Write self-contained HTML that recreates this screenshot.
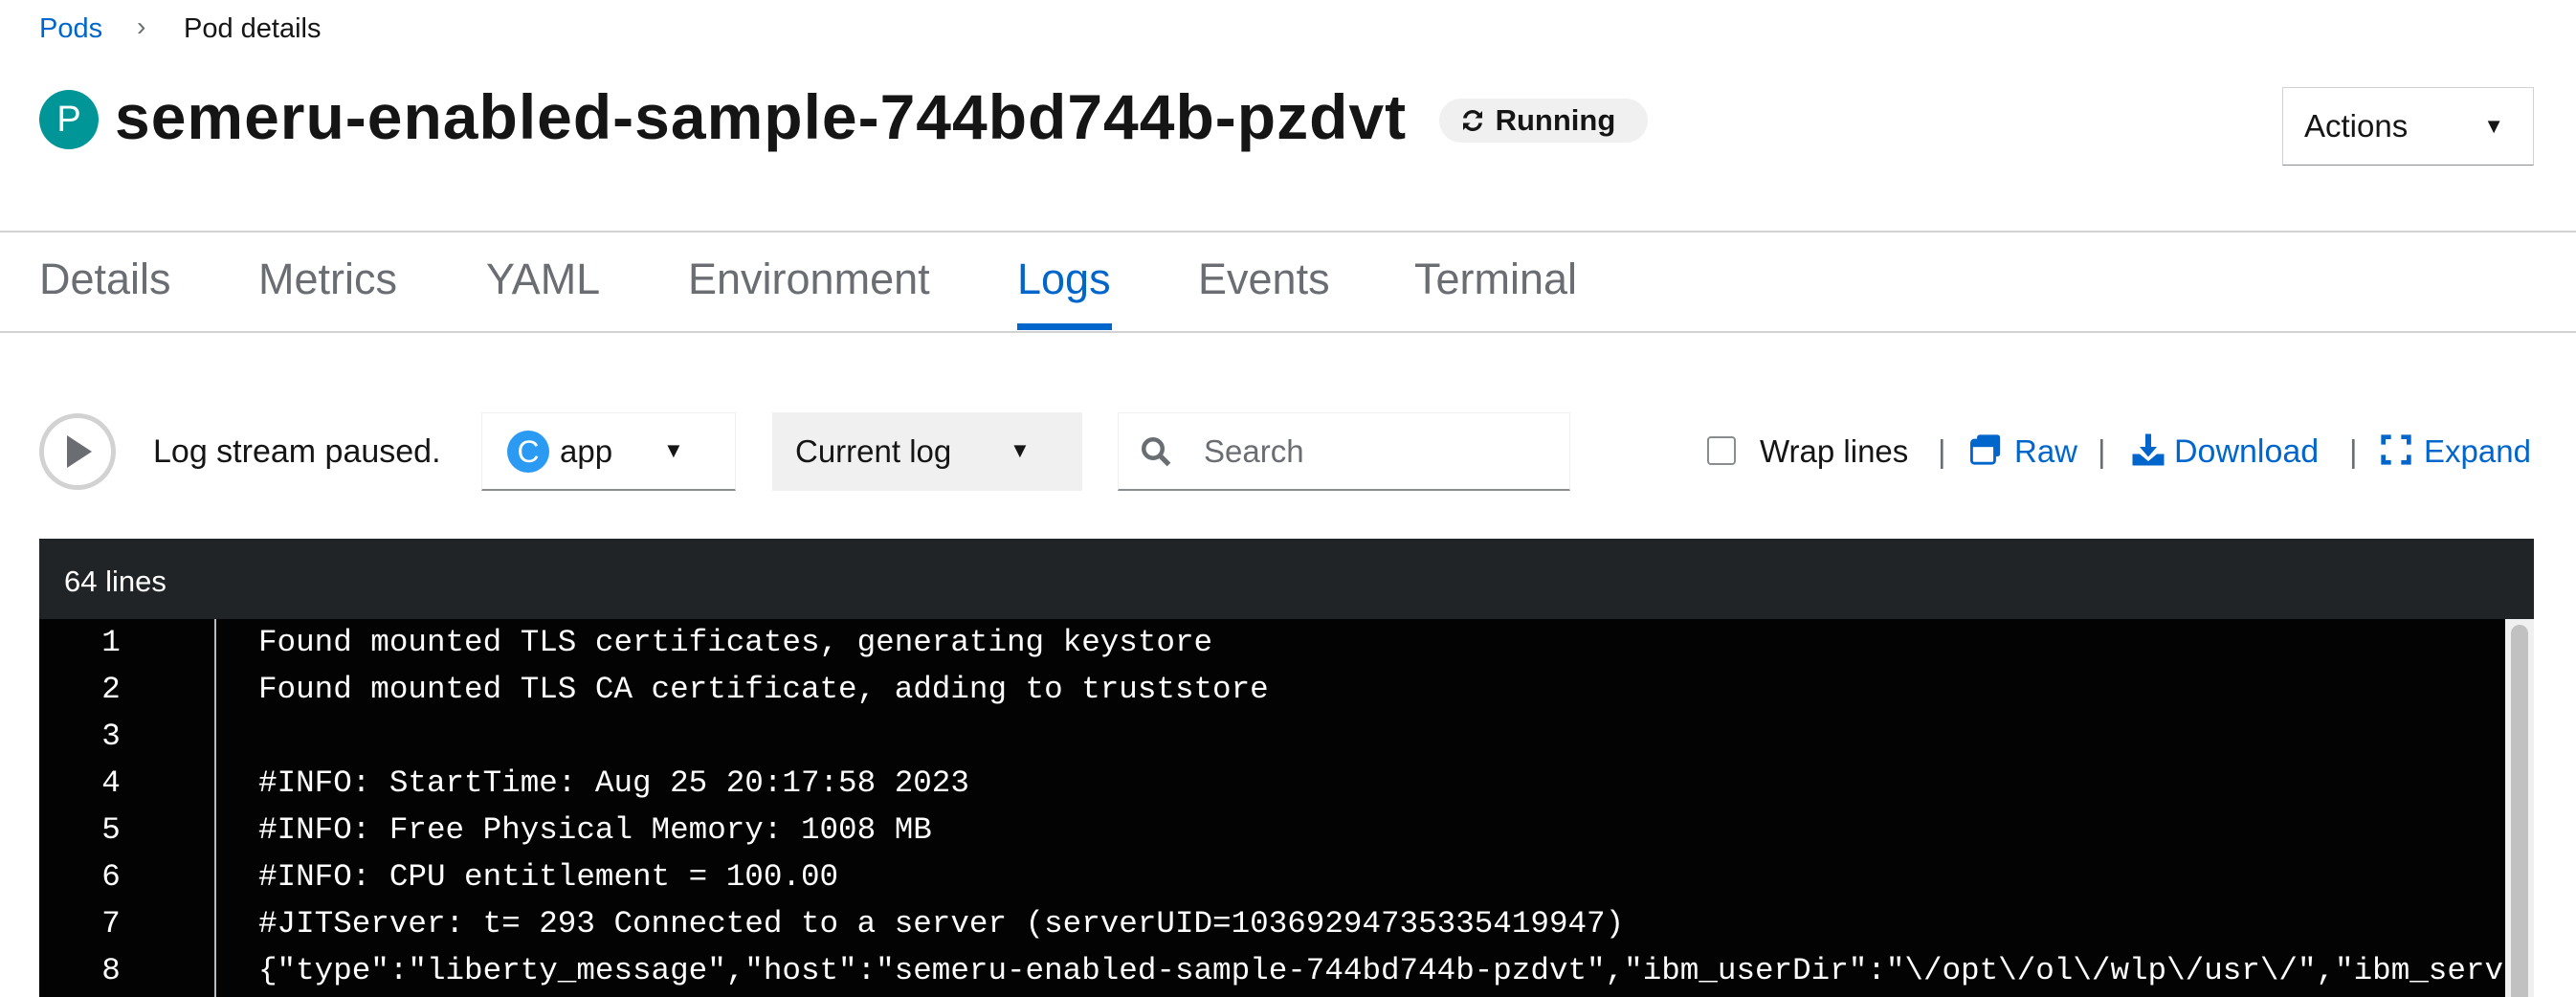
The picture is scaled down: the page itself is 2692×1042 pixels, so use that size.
<!DOCTYPE html>
<html><head><meta charset="utf-8"><style>
*{margin:0;padding:0;box-sizing:border-box}
body{width:2692px;height:1042px;overflow:hidden;background:#fff;font-family:"Liberation Sans",sans-serif;color:#151515;position:relative}
.a{position:absolute;white-space:nowrap}
.tab{position:absolute;top:266px;font-size:45px;color:#6a6e73}
.log{position:absolute;left:0;font-family:"Liberation Mono",monospace;font-size:32.6px;color:#fff;line-height:49px}
</style></head><body>
<div class="a" style="left:41px;top:14px;font-size:29px;color:#06c">Pods</div>
<div class="a" style="left:143px;top:12px;font-size:28px;color:#6a6e73">›</div>
<div class="a" style="left:192px;top:14px;font-size:29px">Pod details</div>
<div class="a" style="left:41px;top:94px;width:62px;height:62px;border-radius:50%;background:#009596;color:#fff;font-size:38px;text-align:center;line-height:62px">P</div>
<div class="a" style="left:120px;top:84px;font-size:66px;font-weight:bold;letter-spacing:1px">semeru-enabled-sample-744bd744b-pzdvt</div>
<div class="a" style="left:1504px;top:103px;width:218px;height:46px;border-radius:23px;background:#f0f0f0;font-size:31px;font-weight:bold;line-height:46px;padding-left:20px">
<svg width="30" height="30" viewBox="0 0 24 24" style="vertical-align:-5px"><path d="M4 10a8 8 0 0 1 14-4l2-2v6h-6l2-2a5 5 0 0 0-9 2zM20 14a8 8 0 0 1-14 4l-2 2v-6h6l-2 2a5 5 0 0 0 9-2z" fill="#151515"/></svg> Running</div>
<div class="a" style="left:2385px;top:91px;width:263px;height:82px;border:1px solid #d2d2d2;border-bottom-color:#8a8d90;font-size:33px;line-height:80px;padding-left:22px">Actions<span style="position:absolute;right:30px;top:0;font-size:22px">▼</span></div>
<div class="a" style="left:0;top:241px;width:2692px;height:2px;background:#d2d2d2"></div>
<div class="tab" style="left:41px">Details</div>
<div class="tab" style="left:270px">Metrics</div>
<div class="tab" style="left:508px">YAML</div>
<div class="tab" style="left:719px">Environment</div>
<div class="tab" style="left:1063px;color:#06c">Logs</div>
<div class="tab" style="left:1252px">Events</div>
<div class="tab" style="left:1478px">Terminal</div>
<div class="a" style="left:1063px;top:338px;width:99px;height:7px;background:#06c"></div>
<div class="a" style="left:0;top:346px;width:2692px;height:2px;background:#d2d2d2"></div>
<div class="a" style="left:41px;top:432px;width:80px;height:80px;border-radius:50%;border:5px solid #d2d2d2"></div>
<div class="a" style="left:70px;top:455px;width:0;height:0;border-left:26px solid #6a6e73;border-top:17px solid transparent;border-bottom:17px solid transparent"></div>
<div class="a" style="left:160px;top:453px;font-size:34px">Log stream paused.</div>
<div class="a" style="left:503px;top:431px;width:266px;height:82px;border:1px solid #f0f0f0;border-bottom:2px solid #8a8d90"></div>
<div class="a" style="left:530px;top:450px;width:44px;height:44px;border-radius:50%;background:#2b9af3;color:#fff;font-size:32px;text-align:center;line-height:44px">C</div>
<div class="a" style="left:585px;top:453px;font-size:33px">app</div>
<div class="a" style="left:693px;top:458px;font-size:22px">▼</div>
<div class="a" style="left:807px;top:431px;width:324px;height:82px;background:#f0f0f0"></div>
<div class="a" style="left:831px;top:453px;font-size:33px">Current log</div>
<div class="a" style="left:1055px;top:458px;font-size:22px">▼</div>
<div class="a" style="left:1168px;top:431px;width:473px;height:82px;border:1px solid #f0f0f0;border-bottom:2px solid #8a8d90"></div>
<svg class="a" style="left:1190px;top:454px" width="36" height="36" viewBox="0 0 24 24"><circle cx="10" cy="10" r="6.5" stroke="#6a6e73" stroke-width="3" fill="none"/><path d="M15 15l6 6" stroke="#6a6e73" stroke-width="3.5"/></svg>
<div class="a" style="left:1258px;top:453px;font-size:33px;color:#6a6e73">Search</div>
<div class="a" style="left:1784px;top:456px;width:30px;height:30px;border:2px solid #8a8d90;border-radius:4px"></div>
<div class="a" style="left:1839px;top:453px;font-size:33px">Wrap lines</div>
<div class="a" style="left:2025px;top:453px;font-size:33px;color:#6a6e73">|</div>
<svg class="a" style="left:2059px;top:453px" width="34" height="34" viewBox="0 0 24 24"><rect x="5" y="1" width="17" height="16" rx="2" fill="#06c"/><rect x="1" y="5" width="17" height="17" rx="2" fill="#fff" stroke="#06c" stroke-width="2"/><rect x="1" y="5" width="17" height="5" fill="#06c"/></svg>
<div class="a" style="left:2105px;top:453px;font-size:33px;color:#06c">Raw</div>
<div class="a" style="left:2192px;top:453px;font-size:33px;color:#6a6e73">|</div>
<svg class="a" style="left:2227px;top:452px" width="36" height="36" viewBox="0 0 24 24"><path d="M10 1h4v9h4l-6 7-6-7h4z" fill="#06c"/><path d="M1 15h5l6 5 6-5h5v8H1z" fill="#06c"/></svg>
<div class="a" style="left:2272px;top:453px;font-size:34px;color:#06c">Download</div>
<div class="a" style="left:2455px;top:453px;font-size:33px;color:#6a6e73">|</div>
<svg class="a" style="left:2488px;top:454px" width="32" height="32" viewBox="0 0 24 24"><path d="M2 8V2h6M16 2h6v6M22 16v6h-6M8 22H2v-6" stroke="#06c" stroke-width="3.5" fill="none"/></svg>
<div class="a" style="left:2533px;top:453px;font-size:33px;color:#06c">Expand</div>
<div class="a" style="left:41px;top:563px;width:2607px;height:84px;background:#212427"></div>
<div class="a" style="left:67px;top:590px;font-size:31px;color:#fff">64 lines</div>
<div class="a" style="left:41px;top:647px;width:2607px;height:395px;background:#030303;overflow:hidden">
<div class="a" style="left:183px;top:0;width:2px;height:400px;background:#b8bbbe"></div>
<div class="a" style="left:2577px;top:0;width:30px;height:400px;background:#f0f0f0"></div>
<div class="a" style="left:2583px;top:6px;width:18px;height:400px;background:#c1c1c1;border-radius:9px"></div>
<div class="log" style="left:0;top:0;width:150px;text-align:center">1<br>2<br>3<br>4<br>5<br>6<br>7<br>8</div>
<div class="log" style="left:229px;top:0;width:2346px;overflow:hidden;white-space:pre">Found mounted TLS certificates, generating keystore
Found mounted TLS CA certificate, adding to truststore

#INFO: StartTime: Aug 25 20:17:58 2023
#INFO: Free Physical Memory: 1008 MB
#INFO: CPU entitlement = 100.00
#JITServer: t= 293 Connected to a server (serverUID=10369294735335419947)
{"type":"liberty_message","host":"semeru-enabled-sample-744bd744b-pzdvt","ibm_userDir":"\/opt\/ol\/wlp\/usr\/","ibm_serverName":"defaultServer"}</div>
</div>
</body></html>
